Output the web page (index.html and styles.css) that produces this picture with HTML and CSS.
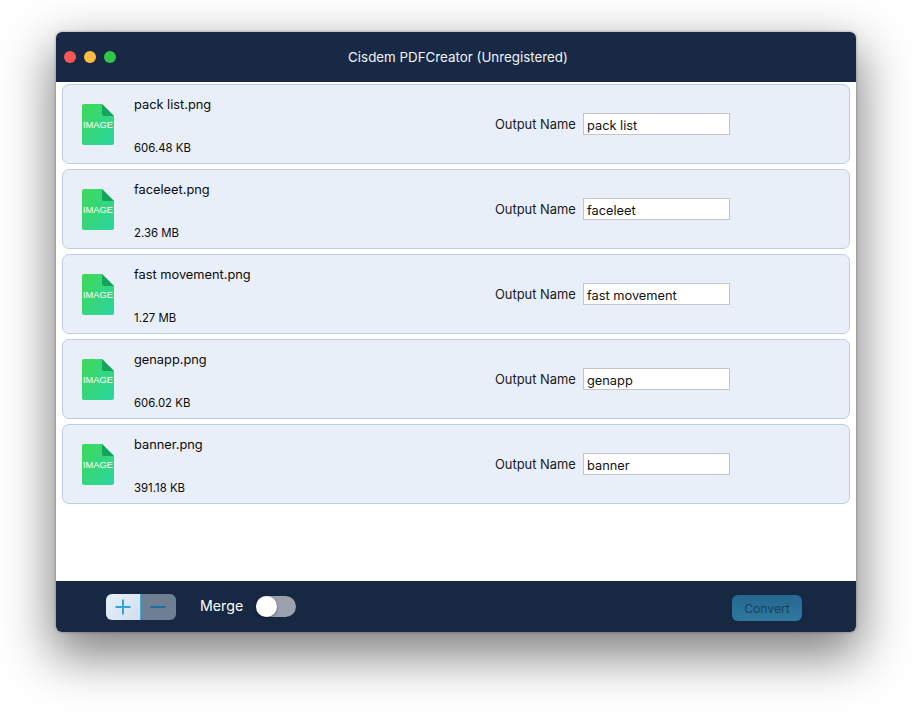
FILE: index.html
```html
<!DOCTYPE html>
<html lang="en">
<head>
<meta charset="utf-8">
<title>Cisdem PDFCreator</title>
<link rel="stylesheet" href="styles.css">
</head>
<body>
<svg class="defs" width="0" height="0" aria-hidden="true">
  <defs>
    <linearGradient id="fileGrad" x1="0" y1="0" x2="1" y2="1">
      <stop offset="0" stop-color="#3fd858"/>
      <stop offset="1" stop-color="#2bd5a0"/>
    </linearGradient>
  </defs>
</svg>
<main class="window">
  <header class="titlebar">
    <div class="lights">
      <span class="light light-red"></span>
      <span class="light light-yellow"></span>
      <span class="light light-green"></span>
    </div>
    <h1 class="title">Cisdem PDFCreator (Unregistered)</h1>
  </header>
  <section class="list">
    <article class="row">
      <div class="file-icon">
        <svg width="32" height="41" viewBox="0 0 32 41"><path d="M2 0H20L32 12V39a2 2 0 0 1-2 2H2a2 2 0 0 1-2-2V2a2 2 0 0 1 2-2Z" fill="url(#fileGrad)"/><path d="M20 0L32 12H22a2 2 0 0 1-2-2Z" fill="#16a35c"/></svg>
        <span class="file-label">IMAGE</span>
      </div>
      <div class="file-info"><div class="file-name">pack list.png</div><div class="file-size">606.48 KB</div></div>
      <label class="output"><span class="output-label">Output Name</span><span class="output-field">pack list</span></label>
    </article>
    <article class="row">
      <div class="file-icon">
        <svg width="32" height="41" viewBox="0 0 32 41"><path d="M2 0H20L32 12V39a2 2 0 0 1-2 2H2a2 2 0 0 1-2-2V2a2 2 0 0 1 2-2Z" fill="url(#fileGrad)"/><path d="M20 0L32 12H22a2 2 0 0 1-2-2Z" fill="#16a35c"/></svg>
        <span class="file-label">IMAGE</span>
      </div>
      <div class="file-info"><div class="file-name">faceleet.png</div><div class="file-size">2.36 MB</div></div>
      <label class="output"><span class="output-label">Output Name</span><span class="output-field">faceleet</span></label>
    </article>
    <article class="row">
      <div class="file-icon">
        <svg width="32" height="41" viewBox="0 0 32 41"><path d="M2 0H20L32 12V39a2 2 0 0 1-2 2H2a2 2 0 0 1-2-2V2a2 2 0 0 1 2-2Z" fill="url(#fileGrad)"/><path d="M20 0L32 12H22a2 2 0 0 1-2-2Z" fill="#16a35c"/></svg>
        <span class="file-label">IMAGE</span>
      </div>
      <div class="file-info"><div class="file-name">fast movement.png</div><div class="file-size">1.27 MB</div></div>
      <label class="output"><span class="output-label">Output Name</span><span class="output-field">fast movement</span></label>
    </article>
    <article class="row">
      <div class="file-icon">
        <svg width="32" height="41" viewBox="0 0 32 41"><path d="M2 0H20L32 12V39a2 2 0 0 1-2 2H2a2 2 0 0 1-2-2V2a2 2 0 0 1 2-2Z" fill="url(#fileGrad)"/><path d="M20 0L32 12H22a2 2 0 0 1-2-2Z" fill="#16a35c"/></svg>
        <span class="file-label">IMAGE</span>
      </div>
      <div class="file-info"><div class="file-name">genapp.png</div><div class="file-size">606.02 KB</div></div>
      <label class="output"><span class="output-label">Output Name</span><span class="output-field">genapp</span></label>
    </article>
    <article class="row">
      <div class="file-icon">
        <svg width="32" height="41" viewBox="0 0 32 41"><path d="M2 0H20L32 12V39a2 2 0 0 1-2 2H2a2 2 0 0 1-2-2V2a2 2 0 0 1 2-2Z" fill="url(#fileGrad)"/><path d="M20 0L32 12H22a2 2 0 0 1-2-2Z" fill="#16a35c"/></svg>
        <span class="file-label">IMAGE</span>
      </div>
      <div class="file-info"><div class="file-name">banner.png</div><div class="file-size">391.18 KB</div></div>
      <label class="output"><span class="output-label">Output Name</span><span class="output-field">banner</span></label>
    </article>
  </section>
  <footer class="footer">
    <div class="stepper">
      <span class="step step-add"><svg width="18" height="18" viewBox="0 0 18 18"><path d="M9 1.500V16.500M1.500 9H16.500" stroke="#2ea3dc" stroke-width="2" fill="none"/></svg></span>
      <span class="step step-remove"><svg width="18" height="18" viewBox="0 0 18 18"><path d="M1.500 9H16.500" stroke="#1d6d9e" stroke-width="2" fill="none"/></svg></span>
    </div>
    <span class="merge-label">Merge</span>
    <span class="toggle"><span class="toggle-knob"></span></span>
    <span class="convert">Convert</span>
  </footer>
</main>
</body>
</html>
```
FILE: styles.css
```css
* { box-sizing: border-box; }
html, body { margin: 0; height: 100%; }
body {
  background: #fff;
  padding: 32px 56px 0;
  overflow: hidden;
  font-family: "Inter", "Liberation Sans", sans-serif;
}
.defs { position: absolute; }
.window {
  width: 800px;
  height: 600px;
  display: flex;
  flex-direction: column;
  border-radius: 6px;
  overflow: hidden;
  background: #fff;
  box-shadow: 0 20px 50px 4px rgba(0, 0, 0, .5), 0 0 3px rgba(0, 0, 0, .35);
}
.titlebar {
  position: relative;
  height: 50px;
  flex: none;
  background: #182945;
  display: flex;
  align-items: center;
  justify-content: center;
  padding: 0 0 1px 4px;
}
.lights {
  position: absolute;
  left: 8px;
  top: 19px;
  display: flex;
  gap: 8px;
}
.light { width: 12px; height: 12px; border-radius: 50%; }
.light-red { background: #fc5753; }
.light-yellow { background: #fdbc40; }
.light-green { background: #33c748; }
.title {
  margin: 0;
  font-size: 13.35px;
  font-weight: 400;
  color: #f2f4f7;
}
.list {
  flex: 1;
  padding: 2px 6px 0;
  display: flex;
  flex-direction: column;
  gap: 5px;
}
.row {
  height: 80px;
  flex: none;
  display: flex;
  background: #e8eff9;
  border: 1px solid #bccde4;
  border-radius: 7px;
}
.file-icon {
  position: relative;
  width: 32px;
  height: 41px;
  margin: 19px 0 0 19px;
  flex: none;
}
.file-icon svg { display: block; }
.file-label {
  position: absolute;
  left: 0;
  right: 0;
  top: 15px;
  text-align: center;
  font-size: 9.3px;
  line-height: 12px;
  color: #fff;
  font-family: "Liberation Sans", sans-serif;
}
.file-info {
  width: 361px;
  margin-left: 20px;
  flex: none;
  display: flex;
  flex-direction: column;
  justify-content: space-between;
  padding: 12px 0 8px;
}
.file-name { font-size: 12.8px; line-height: 16px; color: #0a0a0a; }
.file-size { font-size: 11.4px; line-height: 13px; color: #0a0a0a; }
.output {
  display: flex;
  align-items: center;
  height: 24px;
  margin-top: 27px;
}
.output-label { font-size: 12.9px; color: #1a1a1a; width: 88px; }
.output-field {
  width: 147px;
  height: 22px;
  background: #fff;
  border: 1px solid #c4c4c4;
  padding: 3px 3px 0;
  font-size: 12.8px;
  line-height: 17px;
  color: #111;
}
.footer {
  height: 51px;
  flex: none;
  background: #172843;
  display: flex;
  align-items: flex-start;
  padding: 13px 0 0 50px;
  color: #fff;
}
.stepper {
  width: 70px;
  height: 26px;
  display: flex;
  border-radius: 6px;
  overflow: hidden;
}
.step { display: flex; align-items: center; justify-content: center; }
.step-add {
  width: 35px;
  background: linear-gradient(135deg, #e8f0f9, #cfdfee);
  border-right: 1px solid #49a9dd;
}
.step-remove { width: 35px; background: #6f7f93; padding-right: 1px; }
.merge-label { margin: 3px 0 0 24px; font-size: 14.2px; line-height: 18px; color: #fff; }
.toggle {
  width: 40px;
  height: 21px;
  margin: 2px 0 0 13px;
  border-radius: 11px;
  background: #9ca1ad;
  position: relative;
}
.toggle-knob {
  position: absolute;
  left: 0;
  top: 0;
  width: 21px;
  height: 21px;
  border-radius: 50%;
  background: #fff;
  box-shadow: 0 1px 3px rgba(0, 0, 0, .4);
}
.convert {
  margin: 1px 54px 0 auto;
  width: 70px;
  height: 26px;
  border-radius: 6px;
  background: linear-gradient(#27688f, #2f789f);
  color: #17405f;
  font-size: 12.2px;
  line-height: 27px;
  text-align: center;
}
```
